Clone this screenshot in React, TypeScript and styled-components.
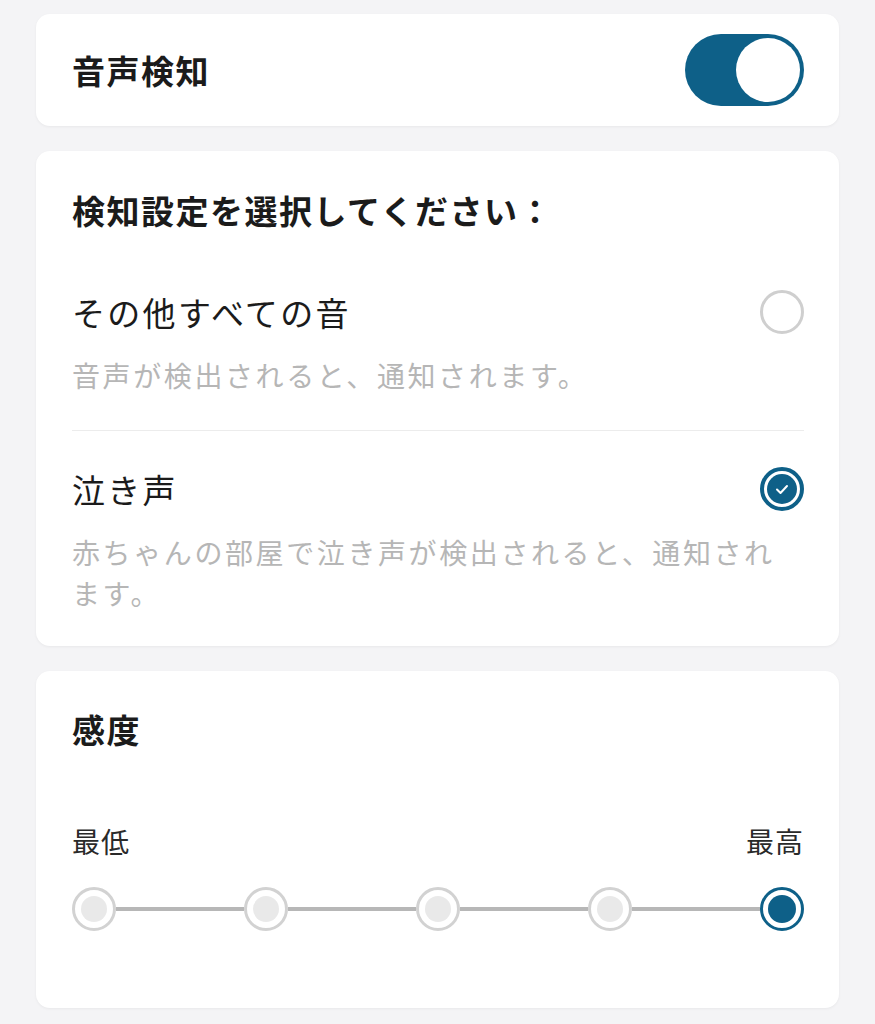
import React, { useState } from "react";
import styled, { createGlobalStyle } from "styled-components";

const Global = createGlobalStyle`
  html, body { margin: 0; padding: 0; background: #f4f4f6; }
  body { font-family: "Noto Sans CJK JP", "Noto Sans", sans-serif; color: #1b1b1b; }
`;

const TEAL = "#0e6088";

const Page = styled.div`
  display: flex;
  flex-direction: column;
  gap: 25px;
  padding: 14px 36px 17px 36px;
  background: #f4f4f6;
`;

const Card = styled.section<{ $pad: string }>`
  background: #fff;
  border-radius: 14px;
  box-shadow: 0 1px 3px rgba(0, 0, 0, 0.05);
  padding: ${(p) => p.$pad};
`;

const Row = styled.div`
  display: flex;
  align-items: center;
  justify-content: space-between;
`;

const Title = styled.h2<{ $mb?: number }>`
  margin: 0 0 ${(p) => p.$mb ?? 0}px;
  font-size: 33px;
  font-weight: 700;
  line-height: 43px;
  letter-spacing: 1.5px;
`;

const Toggle = styled.button<{ $on: boolean }>`
  width: 119px;
  height: 72px;
  border-radius: 36px;
  border: none;
  padding: 4px;
  background: ${(p) => (p.$on ? TEAL : "#ccc")};
  display: flex;
  justify-content: ${(p) => (p.$on ? "flex-end" : "flex-start")};
  cursor: pointer;
`;

const Knob = styled.span`
  width: 64px;
  height: 64px;
  border-radius: 50%;
  background: #fff;
`;

const Option = styled.div<{ $divider?: boolean }>`
  display: flex;
  flex-direction: column;
  gap: 21px;
  padding: 36px 0 ${(p) => (p.$divider ? 34 : 32)}px;
  border-bottom: ${(p) => (p.$divider ? "1px solid #ececec" : "none")};
  cursor: pointer;
`;

const OptionLabel = styled.span`
  font-size: 33px;
  font-weight: 400;
  line-height: 44px;
  letter-spacing: 2.3px;
`;

const Desc = styled.p`
  margin: 0;
  font-size: 28px;
  line-height: 41px;
  color: #b6b6b6;
  letter-spacing: 2.6px;
  padding-right: 14px;
`;

const Radio = styled.span<{ $checked: boolean }>`
  flex: none;
  width: 44px;
  height: 44px;
  box-sizing: border-box;
  border-radius: 50%;
  border: ${(p) => (p.$checked ? `4px solid ${TEAL}` : "3px solid #cfcfcf")};
  padding: 3px;
  display: flex;
`;

const RadioFill = styled.span`
  flex: 1;
  border-radius: 50%;
  background: ${TEAL};
  display: flex;
  align-items: center;
  justify-content: center;
`;

const Labels = styled.div`
  display: flex;
  justify-content: space-between;
  margin-top: 70px;
  font-size: 28px;
  line-height: 40px;
  color: #2a2a2a;
  letter-spacing: 1px;
`;

const Track = styled.div`
  display: flex;
  align-items: center;
  margin-top: 26px;
  margin-bottom: 77px;
`;

const Line = styled.span`
  flex: 1;
  height: 4px;
  background: #b7b7b7;
`;

const Dot = styled.button<{ $active: boolean }>`
  flex: none;
  width: 44px;
  height: 44px;
  box-sizing: border-box;
  border-radius: 50%;
  background: #fff;
  border: ${(p) => (p.$active ? `3px solid ${TEAL}` : "3px solid #d2d2d2")};
  padding: ${(p) => (p.$active ? "5px" : "6px")};
  display: flex;
  cursor: pointer;
`;

const DotFill = styled.span<{ $active: boolean }>`
  flex: 1;
  border-radius: 50%;
  background: ${(p) => (p.$active ? TEAL : "#e9e9e9")};
`;

const Check = () => (
  <svg width="14" height="11" viewBox="0 0 14 11" fill="none">
    <path d="M2 5.5L5.5 9L12 2" stroke="#fff" strokeWidth="2" strokeLinecap="round" strokeLinejoin="round" />
  </svg>
);

export default function App() {
  const [on, setOn] = useState(true);
  const [choice, setChoice] = useState(1);
  const [level, setLevel] = useState(4);
  const options = [
    { label: "その他すべての音", desc: "音声が検出されると、通知されます。" },
    { label: "泣き声", desc: "赤ちゃんの部屋で泣き声が検出されると、通知されます。" },
  ];
  return (
    <>
      <Global />
      <Page>
        <Card $pad="20px 35px 20px 36px">
          <Row>
            <Title>音声検知</Title>
            <Toggle $on={on} onClick={() => setOn(!on)} aria-label="toggle">
              <Knob />
            </Toggle>
          </Row>
        </Card>
        <Card $pad="38px 35px 0 36px">
          <Title $mb={22}>検知設定を選択してください：</Title>
          {options.map((o, i) => (
            <Option key={i} $divider={i === 0} onClick={() => setChoice(i)}>
              <Row>
                <OptionLabel>{o.label}</OptionLabel>
                <Radio $checked={choice === i}>
                  {choice === i && (
                    <RadioFill>
                      <Check />
                    </RadioFill>
                  )}
                </Radio>
              </Row>
              <Desc>{o.desc}</Desc>
            </Option>
          ))}
        </Card>
        <Card $pad="37px 35px 0 36px">
          <Title>感度</Title>
          <Labels>
            <span>最低</span>
            <span>最高</span>
          </Labels>
          <Track>
            {[0, 1, 2, 3, 4].map((i) => (
              <React.Fragment key={i}>
                {i > 0 && <Line />}
                <Dot $active={level === i} onClick={() => setLevel(i)} aria-label={`level ${i}`}>
                  <DotFill $active={level === i} />
                </Dot>
              </React.Fragment>
            ))}
          </Track>
        </Card>
      </Page>
    </>
  );
}
